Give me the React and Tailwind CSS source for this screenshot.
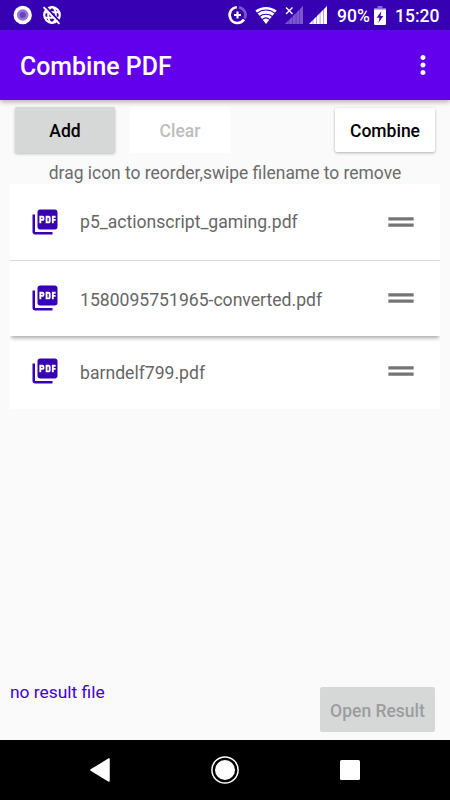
import { useState } from "react";
import { MdDragHandle, MdMoreVert, MdPictureAsPdf } from "react-icons/md";

const FILES = [
  { id: 1, name: "p5_actionscript_gaming.pdf", row: "h-[76px] shadow-[0_1px_0_#dcdcdc]", label: "pt-0" },
  { id: 2, name: "1580095751965-converted.pdf", row: "h-[75px] mt-px z-10 shadow-[0_3px_4px_-1px_rgba(0,0,0,0.35)]", label: "pt-[3px]" },
  { id: 3, name: "barndelf799.pdf", row: "h-[73px] pb-[2px]", label: "pt-[3px]" },
];

function RecordIcon() {
  return (
    <svg width="20" height="20" viewBox="0 0 20 20">
      <circle cx="9.7" cy="10" r="9.2" fill="#fff" />
      <circle cx="9.7" cy="10" r="5.8" fill="#9575d9" />
      <circle cx="9.7" cy="10" r="3" fill="#6a40bf" />
    </svg>
  );
}

function GlobeOffIcon() {
  return (
    <svg width="20" height="20" viewBox="0 0 20 20" fill="none" stroke="#fff">
      <circle cx="10" cy="10" r="7.8" strokeWidth="2.2" />
      <ellipse cx="10" cy="10" rx="3.8" ry="8" strokeWidth="2" />
      <path d="M2.5 7.2h15M2.5 12.8h15" strokeWidth="2" />
      <path d="M3.2 1.2l15.4 16.2" stroke="#3700b3" strokeWidth="1.8" />
      <path d="M1.6 2.2l15.8 16.6" strokeWidth="1.9" />
    </svg>
  );
}

function DataSaverIcon() {
  return (
    <svg width="20" height="20" viewBox="0 0 20 20" fill="none" stroke="#fff">
      <path d="M12 2.2a8 8 0 0 1 5.7 11.3" strokeWidth="2.6" opacity="0.35" />
      <path d="M9.8 2.2a7.9 7.9 0 1 0 7.2 12.4" strokeWidth="2.6" />
      <path d="M10.5 6.5v7M7 10h7" strokeWidth="2.2" />
    </svg>
  );
}

function WifiIcon() {
  return (
    <svg width="22" height="18" viewBox="0 0 22 18" fill="none" stroke="#3700b3">
      <path d="M11 18L0.4 4.6a17 17 0 0 1 21.2 0z" fill="#fff" stroke="none" />
      <path d="M2.2 7.2a13.6 13.6 0 0 1 17.6 0" strokeWidth="1.1" />
      <path d="M4.6 10.5a10 10 0 0 1 12.8 0" strokeWidth="1.1" />
      <path d="M7 13.6a6.2 6.2 0 0 1 8 0" strokeWidth="1.1" />
    </svg>
  );
}

function SignalBars({ className }) {
  return (
    <svg width="18" height="18" viewBox="0 0 18 18" className={className}>
      <path d="M0 18L18 0v18z" fill="#fff" />
      <path d="M3.9 12v6M7.5 9v9M11.1 5v13M14.6 2v16" stroke="#3700b3" strokeWidth="0.4" />
    </svg>
  );
}

function NoSignalIcon() {
  return (
    <span className="relative block">
      <SignalBars className="opacity-35" />
      <svg width="10" height="10" viewBox="0 0 10 10" className="absolute left-0 top-0">
        <path d="M1 1.5l6.5 6.5M7.5 1.5L1 8" stroke="#fff" strokeWidth="1.4" />
      </svg>
    </span>
  );
}

function BatteryIcon() {
  return (
    <svg width="12" height="19" viewBox="0 0 12 19">
      <path d="M3.5 0h5v2H12v2H0V2h3.5z" fill="#fff" opacity="0.4" />
      <path d="M0 3.5h12V18a1 1 0 0 1-1 1H1a1 1 0 0 1-1-1z" fill="#fff" />
      <path d="M7.3 5.2L2.7 11.7h2.8l-1 5 4.8-6.6H6.5z" fill="#3700b3" />
    </svg>
  );
}

function StatusBar() {
  return (
    <div className="h-[30px] bg-[#3700b3] flex items-center pl-[13px] pr-[10px] text-white">
      <RecordIcon />
      <span className="ml-[9px]"><GlobeOffIcon /></span>
      <div className="ml-auto flex items-center">
        <DataSaverIcon />
        <span className="ml-[8px]"><WifiIcon /></span>
        <span className="ml-[8px]"><NoSignalIcon /></span>
        <span className="ml-[6px]"><SignalBars /></span>
        <span className="ml-[10px] w-[33px] text-[17.5px] leading-[30px] font-medium pt-px">90%</span>
        <span className="ml-[4px]"><BatteryIcon /></span>
        <span className="ml-[9px] w-[45px] text-[17.5px] leading-[30px] font-medium pt-px">15:20</span>
      </div>
    </div>
  );
}

function FileRow({ file, onRemove }) {
  return (
    <li className={`relative bg-white flex items-center pl-[20px] pr-[20px] ${file.row}`}>
      <MdPictureAsPdf size={30} className="mb-px text-[#3700b3]" />
      <span
        className={`ml-[20px] flex-1 text-[17.6px] text-[#666] ${file.label}`}
        onDoubleClick={() => onRemove(file.id)}
      >
        {file.name}
      </span>
      <MdDragHandle size={38} className="mb-px text-[#757575]" />
    </li>
  );
}

function NavBar() {
  return (
    <nav className="h-[60px] bg-black flex items-center justify-center">
      <svg width="20" height="24" viewBox="0 0 20 24">
        <path d="M19 1v22L1 12z" fill="#fff" stroke="#fff" strokeWidth="1.5" strokeLinejoin="round" />
      </svg>
      <svg width="28" height="28" viewBox="0 0 28 28" className="mx-[101px]">
        <circle cx="14" cy="14" r="13.1" fill="none" stroke="#fff" strokeWidth="1.5" />
        <circle cx="14" cy="14" r="10" fill="#fff" />
      </svg>
      <span className="w-[20px] h-[20px] rounded-[1.5px] bg-white" />
    </nav>
  );
}

export default function App() {
  const [files, setFiles] = useState(FILES);

  const handleRemove = (id) => {
    setFiles((prev) => prev.filter((f) => f.id !== id));
  };

  return (
    <div className="w-[450px] h-[800px] flex flex-col overflow-hidden bg-[#fafafa] font-['Roboto',sans-serif]">
      <StatusBar />

      <header className="relative z-10 h-[70px] bg-[#6200ee] flex items-center justify-between pl-[20px] pr-[12.5px] text-white shadow-[0_2px_5px_rgba(0,0,0,0.3)]">
        <h1 className="text-[24.9px] font-medium pt-[4px]">Combine PDF</h1>
        <button aria-label="More">
          <MdMoreVert size={30} />
        </button>
      </header>

      {/* ACTIONS */}
      <div className="flex pt-[7px] px-[15px] text-[17.5px] font-medium">
        <button className="w-[100px] h-[46px] pt-[2px] rounded-[2px] bg-[#d6d7d7] text-black shadow-[0_1px_3px_rgba(0,0,0,0.25)]">
          Add
        </button>
        <button disabled className="ml-[15px] w-[100px] h-[46px] pt-[2px] rounded-[2px] bg-white text-[#bdbdbd]">
          Clear
        </button>
        <button className="ml-auto mt-px w-[100px] h-[44px] pt-[2px] rounded-[2px] bg-white text-black shadow-[0_1px_3px_rgba(0,0,0,0.3)]">
          Combine
        </button>
      </div>

      <p className="h-[31px] pt-[8px] text-center text-[17.45px] leading-[24px] text-[#6b6b6b]">
        drag icon to reorder,swipe filename to remove
      </p>

      <ul className="mx-[10px] overflow-hidden">
        {files.map((f) => (
          <FileRow key={f.id} file={f} onRemove={handleRemove} />
        ))}
      </ul>

      <div className="mt-auto flex items-start justify-between pl-[10px] pr-[15px] pb-[7.6px]">
        <span className="-mt-[7px] text-[17.4px] leading-[24px] text-[#3f00d8]">no result file</span>
        <button disabled className="w-[115px] h-[45px] pt-[3px] rounded-[2px] bg-[#d6d7d7] text-[17.5px] font-medium text-[#9c9d9d]">
          Open Result
        </button>
      </div>

      <NavBar />
    </div>
  );
}
